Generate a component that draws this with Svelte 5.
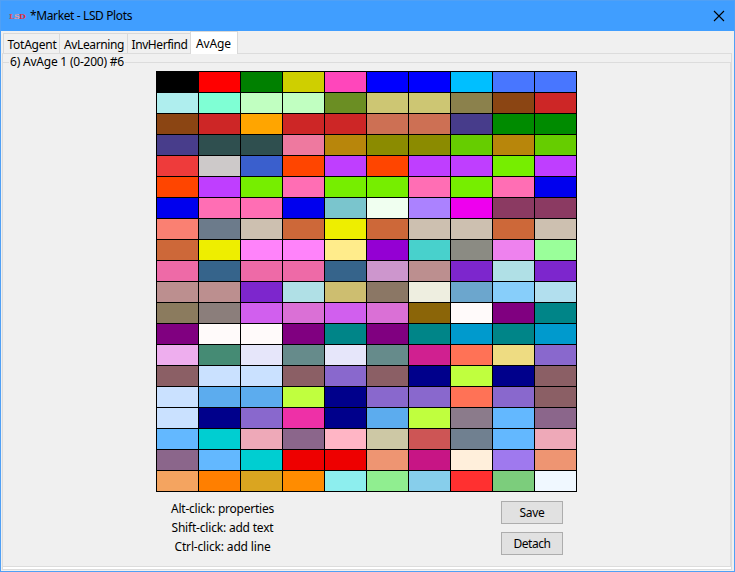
<script>
  const tabs = [
    { label: 'TotAgent', width: 57, text: 49 },
    { label: 'AvLearning', width: 68, text: 60 },
    { label: 'InvHerfind', width: 63, text: 56 },
    { label: 'AvAge', width: 48, text: 35, active: true }
  ];

  const rows = [
    '000000 ff0000 008000 cfcf00 ff46bb 0000ff 0000ff 00bfff 4876ff 4876ff',
    'afeeee 7fffd4 c1ffc1 c1ffc1 6b8e23 cdc673 cdc673 8b814c 8b4513 cd2626',
    '8b4513 cd2626 ffa500 cd2626 cd2626 cd7054 cd7054 473c8b 008b00 008b00',
    '483d8b 2f4f4f 2f4f4f ee799f b8860b 8b8b00 8b8b00 66cd00 b8860b 66cd00',
    'ee3b3b cdc9c9 3a5fcd ff4500 bf3eff ff4500 bf3eff bf3eff 76ee00 bf3eff',
    'ff4500 bf3eff 76ee00 ff6eb4 76ee00 76ee00 ff6eb4 76ee00 ff6eb4 0000ee',
    '0000ee ff6eb4 ff6eb4 0000ee 7ac5cd f0fff0 ab82ff ee00ee 8b3a62 8b3a62',
    'fa8072 6c7b8b cdc0b0 cd6839 eeee00 cd6839 cdc0b0 cdc0b0 cd6839 cdc0b0',
    'cd6839 eeee00 ff83fa ff83fa ffec8b 9400d3 48d1cc 8b8b83 ee82ee 9aff9a',
    'ee6aa7 36648b ee6aa7 ee6aa7 36648b cd96cd bc8f8f 7d26cd b0e0e6 7d26cd',
    'bc8f8f bc8f8f 7d26cd b0e0e6 cdbe70 8b7765 eeeee0 6ca6cd 87cefa b2dfee',
    '8b7b5e 8b7e7b d15fee da70d6 d15fee da70d6 8b6508 fffafa 800080 008588',
    '800080 fffafa fffafa 800080 008588 800080 008588 009acd 008588 009acd',
    'eeaeee 458b74 e6e6fa 668b8b e6e6fa 668b8b d02090 ff7256 eedc82 8968cd',
    '8b5f65 cae1ff cae1ff 8b5f65 8968cd 8b5f65 00008b c0ff3e 00008b 8b5f65',
    'cae1ff 5cacee 5cacee c0ff3e 00008b 8968cd 8968cd ff7256 8968cd 8b5f65',
    'cae1ff 00008b 8968cd ee30a7 00008b 5cacee c0ff3e 8b7b8b 63b8ff 8b668b',
    '63b8ff 00ced1 eea9b8 8b668b ffb5c5 cdc8a5 cd5555 708090 63b8ff eea9b8',
    '8b668b 63b8ff 00ced1 ee0000 ee0000 ee9572 c71585 ffefdb 9f79ee ee9572',
    'f4a460 ff7f00 daa520 ff8c00 8deeee 90ee90 87ceeb ff3030 7ccd7c f0f8ff'
  ];
  const cells = rows.flatMap((r) => r.split(' '));

  const hints = [
    { text: 'Alt-click: properties', width: 103 },
    { text: 'Shift-click: add text', width: 102 },
    { text: 'Ctrl-click: add line', width: 96 }
  ];

  // Sets a line of text to an exact width by spreading the difference over its letters.
  function fit(node, width) {
    const natural = node.getBoundingClientRect().width;
    node.style.letterSpacing = `${(width - natural) / node.textContent.length}px`;
  }
</script>

<div class="window">
  <header>
    <div class="logo"><b>L</b><b>S</b><b>D</b></div>
    <span class="title" use:fit={102}>*Market - LSD Plots</span>
    <svg class="close" width="10" height="10" viewBox="0 0 10 10">
      <path d="M0 0L10 10M10 0L0 10" stroke="#000" stroke-width="1.1" />
    </svg>
  </header>

  <main>
    <nav>
      {#each tabs as tab}
        <div class="tab" class:active={tab.active} style:width="{tab.width}px">
          <span use:fit={tab.text}>{tab.label}</span>
        </div>
      {/each}
    </nav>
    <div class="pane">
      <section>
        <div class="legend"><span use:fit={114}>6) AvAge 1 (0-200) #6</span></div>
        <div class="lattice">
          {#each cells as color}
            <div style:background="#{color}"></div>
          {/each}
        </div>
        <footer>
          <div class="hints">
            {#each hints as hint}
              <div><span use:fit={hint.width}>{hint.text}</span></div>
            {/each}
          </div>
          <div class="buttons">
            <button><span use:fit={25}>Save</span></button>
            <button><span use:fit={37}>Detach</span></button>
          </div>
        </footer>
      </section>
    </div>
  </main>
</div>

<style>
  .window {
    box-sizing: border-box;
    width: 735px;
    height: 572px;
    display: flex;
    flex-direction: column;
    border: 1px solid #50a0f5;
    background: #f0f0f0;
    color: #000;
    font: 12px/16px 'Noto Sans', 'Open Sans', sans-serif;
    overflow: hidden;
  }
  span {
    display: inline-block;
    white-space: pre;
  }
  header {
    height: 30px;
    flex: none;
    display: flex;
    align-items: center;
    background: #409eff;
    padding: 0 10px 0 8px;
  }
  .logo {
    width: 16px;
    margin-right: 5px;
    display: flex;
    justify-content: space-between;
    font: bold 8px/8px 'DejaVu Serif', 'Liberation Serif', serif;
    color: #d8323f;
  }
  .logo b:nth-child(1) {
    width: 5px;
    color: #d4505f;
  }
  .logo b:nth-child(2) {
    width: 5px;
    color: #e59aa6;
  }
  .logo b:nth-child(3) {
    width: 6px;
  }
  .close {
    margin-left: auto;
    overflow: visible;
  }
  main {
    flex: 1;
    display: flex;
    flex-direction: column;
    padding: 0 2px 1px 1px;
  }
  nav {
    height: 22px;
    flex: none;
    display: flex;
    align-items: flex-end;
    padding-left: 1px;
  }
  .tab {
    box-sizing: border-box;
    height: 20px;
    border: 1px solid #d9d9d9;
    border-bottom: 0;
    border-left-width: 0;
    display: flex;
    justify-content: center;
    padding: 3px 0 0 1px;
  }
  .tab:first-child {
    border-left-width: 1px;
  }
  .tab.active {
    height: 23px;
    margin: 0 0 -1px -1px;
    padding: 4px 1px 0 0;
    border-left-width: 1px;
    background: #fff;
    z-index: 1;
  }
  .pane {
    flex: 1;
    border: 1px solid #dcdcdc;
    background: #f0f0f0;
    display: flex;
    flex-direction: column;
    padding: 8px 0 2px;
    box-shadow: inset 0 -2px #fff;
  }
  section {
    flex: 1;
    border: 1px solid #dcdcdc;
    border-left-width: 0;
    display: flex;
    flex-direction: column;
    align-items: center;
    padding-right: 1px;
  }
  .legend {
    align-self: flex-start;
    height: 16px;
    margin: -9px 0 1px 6px;
    padding: 0 1px;
    background: #f0f0f0;
  }
  .lattice {
    box-sizing: border-box;
    width: 421px;
    height: 421px;
    display: grid;
    grid-template-columns: repeat(10, 41px);
    grid-auto-rows: 20px;
    gap: 1px;
    padding: 1px;
    background: #000;
  }
  footer {
    width: 421px;
    display: flex;
    justify-content: space-between;
    padding-top: 9px;
  }
  .hints {
    width: 134px;
    display: flex;
    flex-direction: column;
    align-items: center;
    gap: 3px;
  }
  .buttons {
    display: flex;
    flex-direction: column;
    gap: 8px;
    margin-right: 14px;
  }
  button {
    box-sizing: border-box;
    width: 62px;
    height: 23px;
    border: 1px solid #adadad;
    background: #e1e1e1;
    padding: 0 0 0 1px;
    color: #000;
    font: inherit;
  }
</style>
